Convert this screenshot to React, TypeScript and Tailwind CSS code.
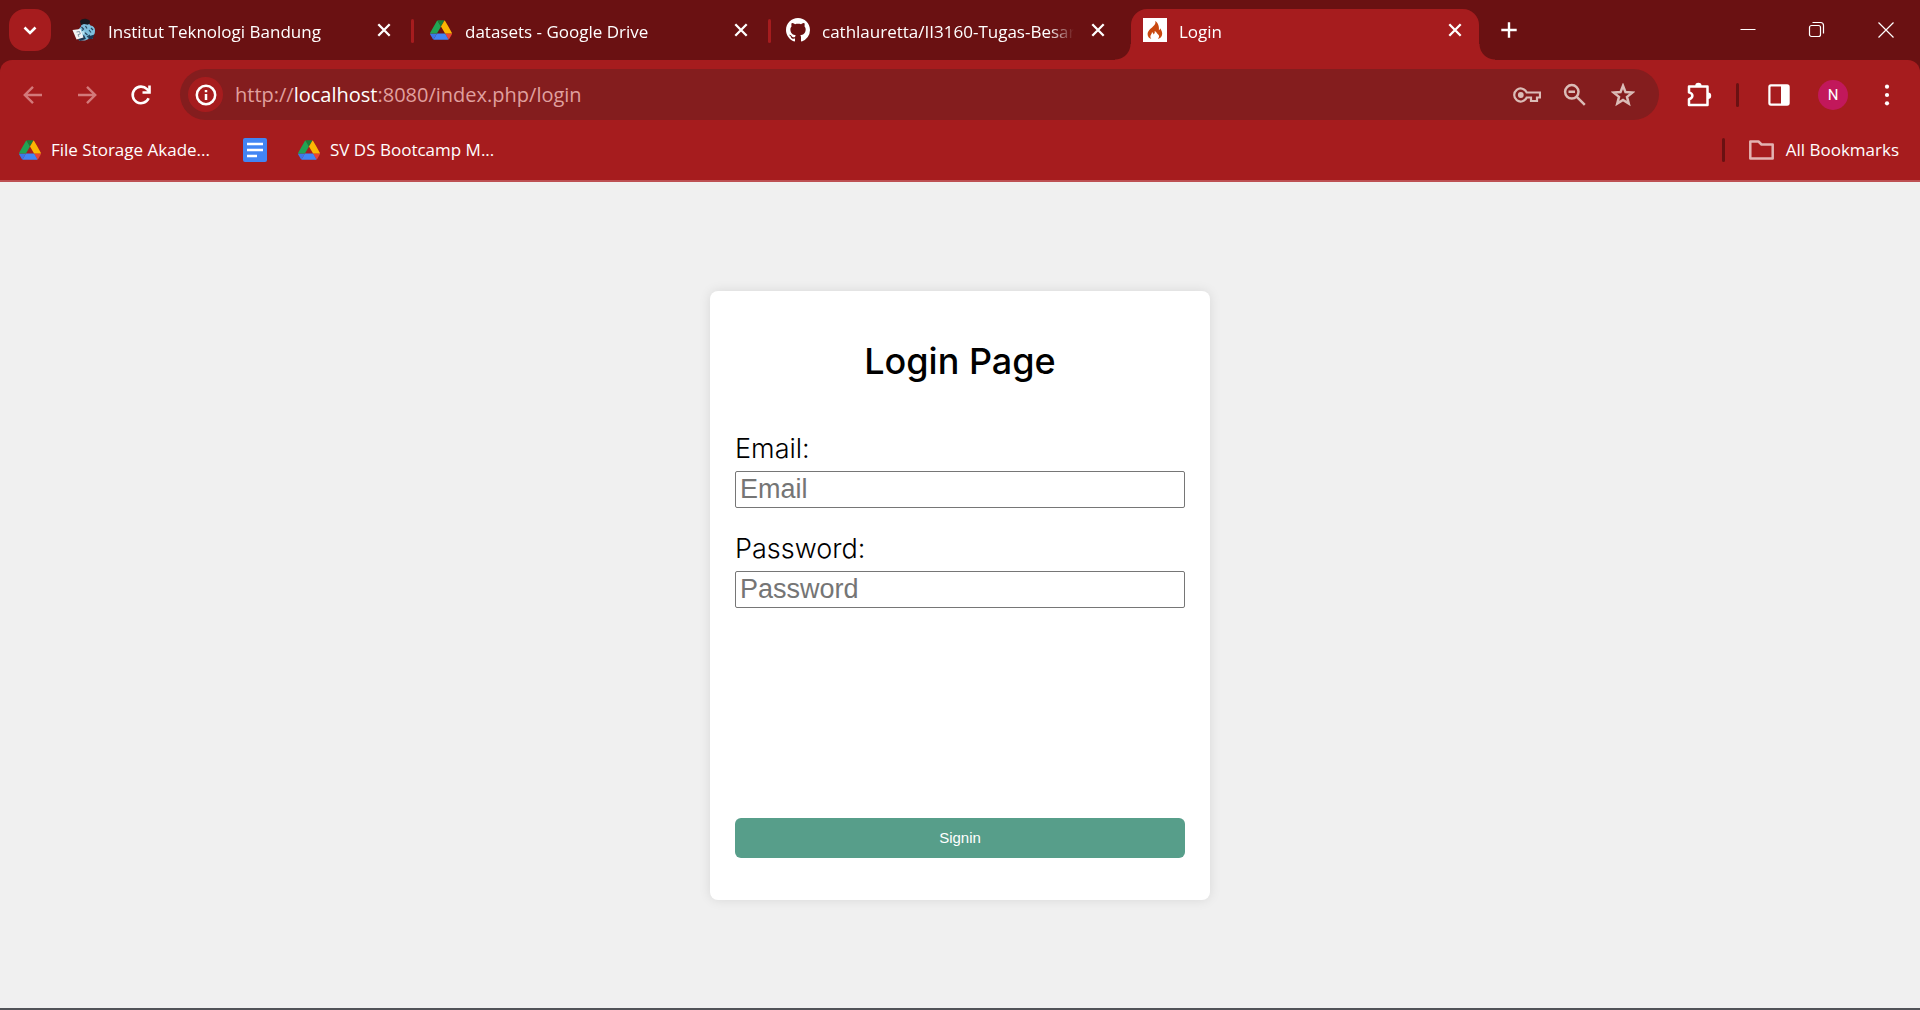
import React from "react";

type IconProps = { className?: string };

const Drive = ({ className = "h-5 w-[22px]" }: IconProps) => (
  <svg viewBox="0 0 87.3 78" className={className} aria-hidden="true">
    <path d="m6.6 66.85 3.85 6.65c.8 1.4 1.95 2.5 3.3 3.3l13.75-23.8h-27.5c0 1.55.4 3.1 1.2 4.5z" fill="#3b78e7" />
    <path d="m43.65 25-13.75-23.8c-1.35.8-2.5 1.9-3.3 3.3l-25.4 44a9.06 9.06 0 0 0 -1.2 4.5h27.5z" fill="#21a453" />
    <path d="m73.55 76.8c1.35-.8 2.5-1.9 3.3-3.3l1.6-2.75 7.65-13.25c.8-1.4 1.2-2.95 1.2-4.5h-27.5l5.85 11.5z" fill="#ea4335" />
    <path d="m43.65 25 13.75-23.8c-1.35-.8-2.9-1.2-4.5-1.2h-18.5c-1.6 0-3.15.45-4.5 1.2z" fill="#188038" />
    <path d="m59.8 53h-32.3l-13.75 23.8c1.35.8 2.9 1.2 4.5 1.2h50.8c1.6 0 3.15-.45 4.5-1.2z" fill="#4285f4" />
    <path d="m73.4 26.5-12.7-22c-.8-1.4-1.95-2.5-3.3-3.3l-13.75 23.8 16.15 28h27.45c0-1.55-.4-3.1-1.2-4.5z" fill="#fbb703" />
  </svg>
);

const Ganesha = () => (
  <svg viewBox="0 0 24 24" className="size-6" aria-hidden="true">
    <path d="M9 8.500C9 6.500 11 5.500 13.500 5.500S18 6 18.500 7.500C21.500 8 23 9.800 23 12.500C23 15 22.500 16.500 21 18L20.500 21H16.500L13 22.500H7L5.500 18L6 12Z" fill="#7fc0de" />
    <path d="M8 3.200C9.500.800 12.500.500 15 1.200C17.500 1.500 18.500 3 17.800 5L16 6.800L12 6L9 7Z" fill="#17191f" />
    <path d="M9.500 9L11.500 11L10 12.500M13.500 8L15 10.500M17 12L19 14.500M12.500 14.500L15.500 17M19 10L21 12M15 19L18 17" fill="none" stroke="#25465f" strokeWidth="1.200" />
    <path d="M16 18.500L22.500 16.500L20.500 21H16.500ZM12 17L14 21L8 23L6 21Z" fill="#1c3854" />
    <path d="M.5 12L8.500 11L11.500 19.500L4.500 21.500Z" fill="#f2f3f4" />
    <path d="M4.500 14L7.500 13.500L8.300 16L6 16.600L6.800 18.800" fill="none" stroke="#7f95a5" strokeWidth="1" />
    <path d="M9.500 13L12.500 13.500L12.500 16L10.500 16Z" fill="#b9e3f2" />
  </svg>
);

const Github = () => (
  <svg viewBox="0 0 16 16" className="size-6" fill="#fff" aria-hidden="true">
    <path d="M8 0C3.580 0 0 3.580 0 8c0 3.540 2.290 6.530 5.470 7.590.4.070.55-.17.55-.38 0-.19-.01-.82-.01-1.490-2.010.37-2.530-.49-2.690-.94-.09-.23-.48-.94-.82-1.130-.28-.15-.68-.52-.01-.53.63-.01 1.080.58 1.230.82.72 1.210 1.870.87 2.330.66.07-.52.28-.87.51-1.070-1.780-.2-3.640-.89-3.640-3.950 0-.87.31-1.590.82-2.150-.08-.2-.36-1.020.08-2.120 0 0 .67-.21 2.200.82.64-.18 1.320-.27 2-.27s1.360.09 2 .27c1.530-1.040 2.200-.82 2.200-.82.44 1.100.16 1.920.08 2.120.51.56.82 1.270.82 2.150 0 3.070-1.870 3.750-3.650 3.950.29.25.54.73.54 1.480 0 1.070-.01 1.930-.01 2.200 0 .21.15.46.55.38A8.010 8.010 0 0 0 16 8c0-4.420-3.580-8-8-8z" />
  </svg>
);

const Flame = () => (
  <svg viewBox="0 0 24 24" className="size-6 bg-white" aria-hidden="true">
    <path d="M12.200 3C13 5.300 11.900 6.800 10 8.600C7.500 11 4.600 13 4.600 16.200C4.600 18.500 6 20.200 8.400 20.900C7.200 19.500 7 18 8 16.700C8.600 15.900 9 15.300 8.900 14.300C9.900 14.700 10.500 15.400 10.400 16.400C11.600 15.600 12.100 14.400 11.600 13C13.600 14 14 15.500 15.200 16.600C16.600 18 16.300 19.700 14.700 21C17.500 20.300 19.200 18.400 19.200 15.700C19.200 13.500 18 12 17.300 10.300C17.100 11.300 16.700 11.900 15.900 12.200C16.300 9.300 15.500 5 12.200 3Z" fill="#c9480f" />
  </svg>
);

const Docs = () => (
  <svg viewBox="0 0 24 24" className="size-6" aria-hidden="true">
    <rect width="24" height="24" rx="2" fill="#4285f4" />
    <path d="M4 6h16M4 12h16M4 18h10" stroke="#fff" strokeWidth="2.400" />
  </svg>
);

const Cross = () => (
  <svg viewBox="0 0 24 24" className="size-6" fill="none" stroke="#fff" strokeWidth="2.300" aria-hidden="true">
    <path d="M6.300 6.300L17.700 17.700M17.700 6.300L6.300 17.700" />
  </svg>
);

const Line = ({ className = "size-6", width = 2.2, children }: IconProps & { width?: number; children: React.ReactNode }) => (
  <svg viewBox="0 0 24 24" className={className} fill="none" stroke="currentColor" strokeWidth={width} aria-hidden="true">
    {children}
  </svg>
);

const tabs = [
  { title: "Institut Teknologi Bandung", icon: <Ganesha /> },
  { title: "datasets - Google Drive", icon: <span className="flex size-6 items-center justify-center"><Drive /></span> },
  { title: "cathlauretta/II3160-Tugas-Besar", icon: <Github /> },
  { title: "Login", icon: <Flame />, active: true },
];

function Tab({ title, icon, active, divider }: { title: string; icon: React.ReactNode; active?: boolean; divider: boolean }) {
  return (
    <div
      className={
        "relative flex h-[51px] w-[348px] min-w-0 shrink items-start gap-3 rounded-t-2xl px-3 pt-[9px] " +
        (active
          ? "bg-[#a61c1e] before:absolute before:bottom-0 before:-left-4 before:size-4 before:bg-[radial-gradient(circle_at_0_0,transparent_15px,#a61c1e_16px)] after:absolute after:-right-4 after:bottom-0 after:size-4 after:bg-[radial-gradient(circle_at_100%_0,transparent_15px,#a61c1e_16px)]"
          : "")
      }
    >
      <span className="shrink-0">{icon}</span>
      <span className="min-w-0 flex-1 overflow-hidden whitespace-nowrap mask-r-from-90% text-[17px] leading-7">{title}</span>
      <button type="button" aria-label={`Close ${title}`} className="shrink-0"><Cross /></button>
      {divider && <span className="absolute top-[10px] -right-[6px] h-6 w-[3px] rounded-sm bg-[#a61c1e]" />}
    </div>
  );
}

function TabStrip() {
  return (
    <div className="flex h-[60px] items-start pt-[9px]">
      <button type="button" aria-label="Search tabs" className="mx-[9px] flex size-[42px] shrink-0 items-center justify-center rounded-2xl bg-[#a61c1e]">
        <Line width={2.6}><path d="M6.500 9.500L12 15L17.500 9.500" /></Line>
      </button>
      <div className="flex min-w-0 gap-[9px]">
        {tabs.map((t, i) => (
          <Tab key={t.title} {...t} divider={i < 2} />
        ))}
      </div>
      <button type="button" aria-label="New tab" className="ml-[9px] flex size-[42px] shrink-0 items-center justify-center">
        <Line width={2.4}><path d="M12 4.300V19.700M4.300 12H19.700" /></Line>
      </button>
      <div className="-mt-[9px] ml-auto flex shrink-0">
        <button type="button" aria-label="Minimize" className="flex h-[60px] w-[69px] items-center justify-center">
          <Line width={1}><path d="M4.500 11.500H19.500" /></Line>
        </button>
        <button type="button" aria-label="Restore" className="flex h-[60px] w-[69px] items-center justify-center">
          <Line width={1.2}>
            <rect x="4.500" y="7.500" width="11" height="11" rx="2" />
            <path d="M7.500 4.500H15.500C17.500 4.500 18.500 5.500 18.500 7.500V15.500" />
          </Line>
        </button>
        <button type="button" aria-label="Close window" className="flex h-[60px] w-[69px] items-center justify-center">
          <Line width={1.2}><path d="M4.500 4.500L19.500 19.500M19.500 4.500L4.500 19.500" /></Line>
        </button>
      </div>
    </div>
  );
}

const toolButton = "flex h-[51px] w-[54px] shrink-0 items-center justify-center";
const omniButton = "flex h-[51px] w-12 shrink-0 items-center justify-center text-[#dbbcb7]";

function Toolbar() {
  return (
    <div className="flex items-center pt-[9px] pl-[6px] pr-[6px]">
      <button type="button" aria-label="Back" className={toolButton + " text-[#d3797a]"}>
        <Line width={2.4}><path d="M21 12H4.500M12 3.800L3.800 12L12 20.200" /></Line>
      </button>
      <button type="button" aria-label="Forward" className={toolButton + " text-[#d3797a]"}>
        <Line width={2.4}><path d="M3 12H19.500M12 3.800L20.200 12L12 20.200" /></Line>
      </button>
      <button type="button" aria-label="Reload" className={toolButton}>
        <Line width={2.6}>
          <path d="M19.600 15.200A8.300 8.300 0 1 1 18 6.200L20.500 8.800" />
          <path d="M20.500 2.500V9.500H13.500" />
        </Line>
      </button>
      <div className="ml-3 flex h-[51px] min-w-0 flex-1 items-center rounded-full bg-[#841d1e] pr-3 pl-2">
        <button type="button" aria-label="View site information" className="flex size-[35px] shrink-0 items-center justify-center rounded-full bg-[#a61c1e]">
          <Line width={2.5}>
            <circle cx="12" cy="12" r="9.200" />
            <path d="M12 11V17M12 7V9.300" />
          </Line>
        </button>
        <div className="ml-3 min-w-0 flex-1 truncate text-[20px] leading-[30px] text-[#e0a09f]">
          http://<span className="text-white">localhost</span>:8080/index.php/login
        </div>
        <button type="button" aria-label="Passwords" className={omniButton}>
          <svg viewBox="0 0 28 24" className="h-6 w-7" fill="none" stroke="currentColor" strokeWidth="2.200" aria-hidden="true">
            <path d="M13.700 9.500A6.500 6.500 0 1 0 13.700 14.500H18V18H24V14.500H27V9.500Z" />
            <circle cx="7.800" cy="12" r="2.900" fill="currentColor" stroke="none" />
          </svg>
        </button>
        <button type="button" aria-label="Zoom" className={omniButton}>
          <Line width={2.5}>
            <circle cx="8.800" cy="8.800" r="6.700" />
            <path d="M13.800 13.800L21.800 21.800M5.500 8.800H12" />
          </Line>
        </button>
        <button type="button" aria-label="Bookmark this tab" className={omniButton}>
          <Line width={2.5}>
            <path d="M12 2.800L14.500 9.100L21.300 9.600L16 13.900L17.700 20.500L12 16.900L6.300 20.500L8 13.900L2.700 9.600L9.500 9.100Z" />
          </Line>
        </button>
      </div>
      <button type="button" aria-label="Extensions" className={toolButton + " ml-[13px]"}>
        <svg viewBox="0 0 26 26" className="size-[26px]" fill="none" aria-hidden="true">
          <path d="M3 4.500H21.500V23H3V17.300C5.300 16.600 6.400 15.500 6.400 13.800S5.300 11 3 10.400Z" stroke="#fff" strokeWidth="2.500" strokeLinejoin="round" />
          <path d="M9.200 4A3.200 3.200 0 0 1 15.600 4ZM22 10.600A3.200 3.200 0 0 1 22 17Z" fill="#fff" />
        </svg>
      </button>
      <span className="mr-[13px] ml-[10px] h-6 w-[3px] shrink-0 rounded-sm bg-[#6a1112]" />
      <button type="button" aria-label="Side panel" className={toolButton}>
        <Line width={2.2}>
          <rect x="2.400" y="2.400" width="19.200" height="19.200" rx="1.500" />
          <path d="M14 2.500H21.500V21.500H14Z" fill="currentColor" stroke="none" />
        </Line>
      </button>
      <button type="button" aria-label="Profile N" className={toolButton}>
        <span className="flex size-[30px] items-center justify-center rounded-full bg-[#c2185b] font-[Roboto] text-[15px] leading-5">N</span>
      </button>
      <button type="button" aria-label="Menu" className={toolButton}>
        <svg viewBox="0 0 24 24" className="size-6" fill="#fff" aria-hidden="true">
          <circle cx="12" cy="3.700" r="2.100" /><circle cx="12" cy="12" r="2.100" /><circle cx="12" cy="20.300" r="2.100" />
        </svg>
      </button>
    </div>
  );
}

function Bookmarks() {
  return (
    <nav aria-label="Bookmarks" className="flex h-[60px] items-center pr-[21px] pl-[19px] text-[17px] leading-6">
      <a href="#storage" className="flex items-center gap-[10px]"><Drive />File Storage Akade...</a>
      <a href="#docs" aria-label="Docs" className="ml-[33px]"><Docs /></a>
      <a href="#bootcamp" className="ml-[31px] flex items-center gap-[10px]"><Drive />SV DS Bootcamp M...</a>
      <span className="ml-auto h-6 w-[3px] rounded-sm bg-[#6a1112]" />
      <button type="button" className="ml-6 flex items-center gap-3">
        <svg viewBox="0 0 25 20" className="h-5 w-[25px] text-[#e3b3b2]" fill="none" stroke="currentColor" strokeWidth="2.500" strokeLinejoin="round" aria-hidden="true">
          <path d="M1.300 1.500H9.500L12.500 4.500H23.700V18.500H1.300Z" />
        </svg>
        All Bookmarks
      </button>
    </nav>
  );
}

function Field({ id, label, type }: { id: string; label: string; type: string }) {
  return (
    <div className="flex flex-col gap-[6px]">
      <label htmlFor={id} className="font-[Inter] text-[27px] leading-8 font-light text-black">{label}:</label>
      <input
        id={id}
        type={type}
        placeholder={label}
        className="h-[37px] w-full rounded-xs border border-[#767676] bg-white px-1 font-['Liberation_Sans'] text-[27px] leading-8 text-black placeholder:text-[#757575]"
      />
    </div>
  );
}

export default function App() {
  return (
    <div className="flex min-h-screen flex-col bg-[#f0f0f0]">
      <header className="bg-[#6a1112] font-['Open_Sans',sans-serif] text-white">
        <TabStrip />
        <div className="rounded-t-xl border-b-2 border-[#bd5053] bg-[#a61c1e]">
          <Toolbar />
          <Bookmarks />
        </div>
      </header>
      <main className="flex flex-1 items-center justify-center border-b-2 border-[#515358]">
        <form
          onSubmit={(e) => e.preventDefault()}
          className="w-full max-w-[500px] rounded-lg bg-white px-[25px] pt-[46px] pb-[42px] shadow-[0_0_12px_rgba(0,0,0,0.1)]"
        >
          <h1 className="mb-12 text-center font-[Inter] text-[36px] leading-[48px] font-medium text-black">Login Page</h1>
          <div className="flex flex-col gap-[25px]">
            <Field id="email" label="Email" type="email" />
            <Field id="password" label="Password" type="password" />
          </div>
          <button type="submit" className="mt-[210px] block h-10 w-full rounded-md bg-[#579e8a] font-['Liberation_Sans'] text-[15px] leading-5 text-white">
            Signin
          </button>
        </form>
      </main>
    </div>
  );
}
